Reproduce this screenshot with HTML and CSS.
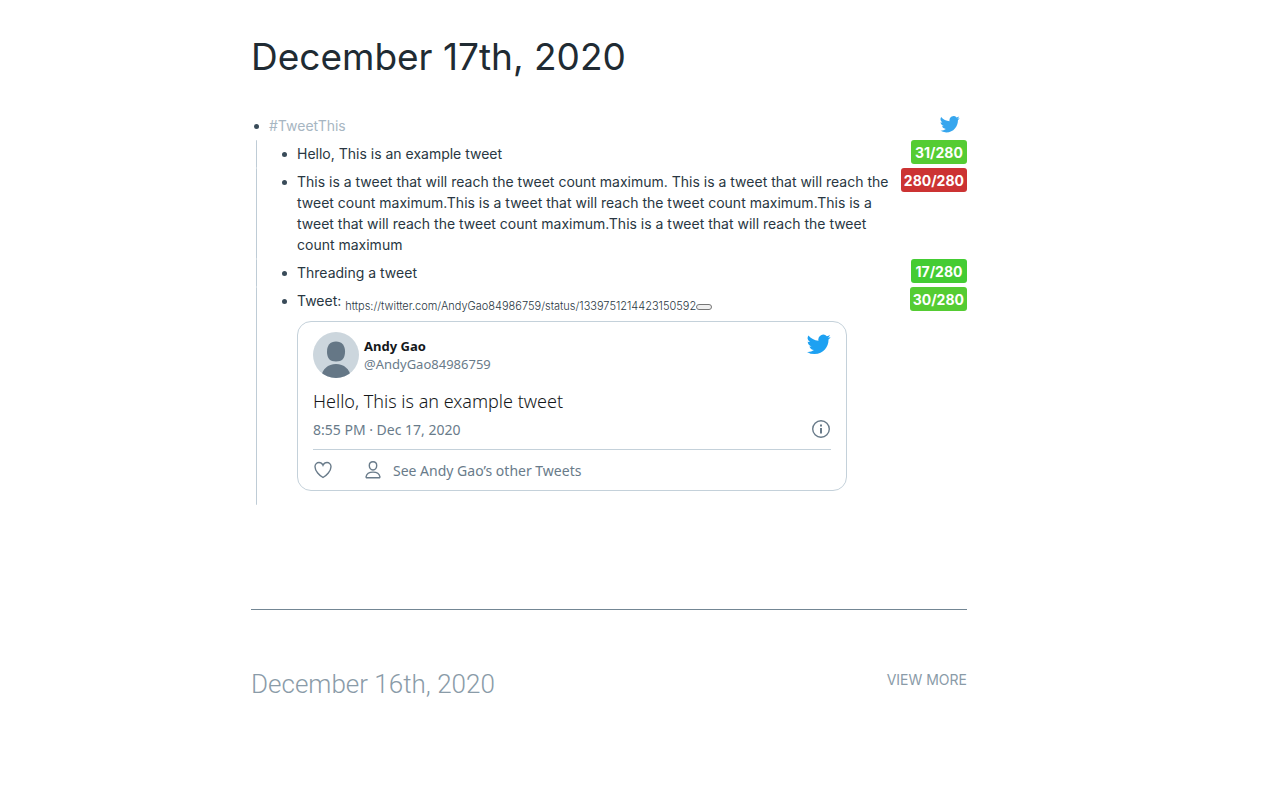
FILE: index.html
```html
<!DOCTYPE html>
<html lang="en">
<head>
    <meta charset="utf-8">
    <title>December 17th, 2020</title>
    <meta name="viewport" content="width=device-width, initial-scale=1.0">
    <link rel="stylesheet" href="styles.css">
</head>
<body>
    <!-- Shared icon shapes -->
    <svg class="icon-defs" aria-hidden="true">
        <symbol id="bird" viewBox="0 0 24 24">
            <path d="M23.6 4.9c-.9.4-1.8.6-2.8.8 1-.6 1.8-1.6 2.2-2.7-1 .6-2 1-3.1 1.2a4.9 4.9 0 0 0-8.4 4.5C7.4 8.500 3.800 6.500 1.400 3.600a4.900 4.900 0 0 0 1.500 6.500c-.8 0-1.600-.2-2.200-.6v.1c0 2.400 1.700 4.400 3.900 4.800a4.900 4.900 0 0 1-2.200.1c.6 2 2.400 3.400 4.600 3.400A9.900 9.900 0 0 1 0 19.900a13.900 13.900 0 0 0 7.500 2.200c9.100 0 14-7.500 14-14v-.6c.8-.7 1.500-1.600 2.100-2.600z"/>
        </symbol>
    </svg>

    <main class="page">
        <h1 class="title">December 17th, 2020</h1>

        <div class="block">
            <span class="bullet"></span>
            <div class="block-text"><a class="tag" href="#">#TweetThis</a></div>
            <button class="tweet-btn" aria-label="Send tweet"><svg class="bird-small"><use href="#bird"/></svg></button>
        </div>

        <div class="children">
            <div class="block">
                <span class="bullet"></span>
                <div class="block-text">Hello, This is an example tweet</div>
                <span class="count">31/280</span>
            </div>
            <div class="block">
                <span class="bullet"></span>
                <div class="block-text">This is a tweet that will reach the tweet count maximum. This is a tweet that will reach the tweet count maximum.This is a tweet that will reach the tweet count maximum.This is a tweet that will reach the tweet count maximum.This is a tweet that will reach the tweet count maximum</div>
                <span class="count count-max">280/280</span>
            </div>
            <div class="block">
                <span class="bullet"></span>
                <div class="block-text">Threading a tweet</div>
                <span class="count count-low">17/280</span>
            </div>
            <div class="block">
                <span class="bullet"></span>
                <div class="block-text">
                    Tweet: <span class="url">https://twitter.com/AndyGao84986759/status/1339751214423150592<button class="url-btn" aria-label="Edit link"></button></span>

                    <article class="tweet">
                        <header class="tweet-head">
                            <svg class="avatar" viewBox="0 0 46 46">
                                <defs><clipPath id="round"><circle cx="23" cy="23" r="23"/></clipPath></defs>
                                <g clip-path="url(#round)">
                                    <rect width="46" height="46" fill="#ccd6dd"/>
                                    <path d="M23 9.500c-6 0-9 4-9 10 0 7 3 10 9 10s9-3 9-10c0-6-3-10-9-10z" fill="#657786"/>
                                    <path d="M8 46c1-9 7-14 15-14s14 5 15 14z" fill="#657786"/>
                                </g>
                            </svg>
                            <div class="author">
                                <strong class="name">Andy Gao</strong>
                                <a class="handle" href="#">@AndyGao84986759</a>
                            </div>
                            <svg class="bird-large"><use href="#bird"/></svg>
                        </header>
                        <p class="tweet-text">Hello, This is an example tweet</p>
                        <div class="tweet-meta">
                            <a href="#">8:55 PM · Dec 17, 2020</a>
                            <svg class="icon" viewBox="0 0 20 20">
                                <circle cx="10" cy="10" r="8.300"/>
                                <path d="M10 9v5.500M10 5.500v2" stroke-width="2"/>
                            </svg>
                        </div>
                        <footer class="tweet-foot">
                            <button class="like" aria-label="Like">
                                <svg class="icon" viewBox="0 0 20 20">
                                    <path d="M10 17.500C6.500 15.500 2 11 2 6.800 2 4.200 3.900 2.500 6 2.500c1.800 0 3.200 1.100 4 2.800.8-1.700 2.200-2.800 4-2.800 2.100 0 4 1.700 4 4.300 0 4.200-4.500 8.700-8 10.700z"/>
                                </svg>
                            </button>
                            <a class="others" href="#">
                                <svg class="icon" viewBox="0 0 20 20">
                                    <path d="M10 1.700c-2.500 0-3.700 1.600-3.700 3.900S7.700 10 10 10s3.700-2.100 3.700-4.400S12.500 1.700 10 1.700zM4 17.700c-.7 0-1-.4-.9-1 .5-2.900 3.200-4.600 6.900-4.600s6.400 1.700 6.900 4.600c.1.600-.2 1-.9 1z"/>
                                </svg>
                                See Andy Gao’s other Tweets
                            </a>
                        </footer>
                    </article>
                </div>
                <span class="count">30/280</span>
            </div>
        </div>

        <section class="previous">
            <h2 class="previous-title">December 16th, 2020</h2>
            <a class="view-more" href="#">VIEW MORE</a>
        </section>
    </main>
</body>
</html>
```
FILE: styles.css
```css
* {
    box-sizing: border-box;
}
body {
    margin: 0;
    background: #fff;
    color: #202b33;
    font-family: Inter, sans-serif;
    font-size: 14px;
    line-height: 21px;
}
a {
    color: inherit;
    text-decoration: none;
}
button {
    padding: 0;
    border: 0;
    background: none;
    cursor: pointer;
}
svg {
    display: block;
    flex: none;
}
.icon-defs {
    display: none;
}
.page {
    padding: 32px 313px 40px 251px;
}
.title {
    margin: 0 0 30px;
    font-size: 37px;
    font-weight: 400;
    line-height: 50px;
}

/* Outline blocks */
.block {
    display: flex;
    align-items: flex-start;
    min-height: 28px;
}
.bullet {
    flex: none;
    width: 5px;
    height: 5px;
    margin: 12px 10px 0 3px;
    border-radius: 50%;
    background: #394b59;
}
.block-text {
    flex: 1;
    min-width: 0;
    padding: 3px 0 4px;
}
.children {
    margin-left: 5px;
}
.children .block {
    padding-left: 22px;
    border-left: 1px solid #bfccd6;
    border-radius: 1px;
}
.children .block-text {
    color: #293742;
}
.tag {
    color: #a7b6c2;
}
.tweet-btn {
    margin: 2px 7px 0 0;
}
.bird-small {
    width: 20px;
    height: 20px;
    fill: #37a6ee;
}

/* Character counters */
.count {
    flex: none;
    min-width: 56px;
    margin-left: 6px;
    padding: 2px 3px 0;
    border-radius: 3px;
    background: #5c3;
    color: #fff;
    font-weight: 700;
    line-height: 22px;
    text-align: center;
}
.count-low {
    background: #4c3;
}
.count-max {
    background: #c33;
}

.url {
    font-size: 11px;
    font-weight: 300;
    vertical-align: sub;
    line-height: 11px;
}
.url-btn {
    width: 16px;
    height: 6px;
    border: 1px solid #767676;
    border-radius: 3px;
    background: #efefef;
    vertical-align: 1px;
}

/* Embedded tweet */
.tweet {
    max-width: 550px;
    margin: 9px 0 10px;
    padding: 10px 15px 9px;
    border: 1px solid #c4d1da;
    border-radius: 14px;
    color: #697b8a;
    font-family: "Noto Sans", sans-serif;
}
.tweet-head {
    display: flex;
    align-items: flex-start;
}
.avatar {
    width: 46px;
    height: 46px;
}
.author {
    flex: 1;
    margin: 5px;
    font-size: 13px;
    line-height: 18px;
}
.name {
    display: block;
    color: #14171a;
    font-weight: 700;
}
.handle {
    display: block;
}
.bird-large {
    width: 24px;
    height: 24px;
    fill: #1da1f2;
}
.tweet-text {
    margin: 10px 0 5px;
    color: #14171a;
    font-size: 18px;
    font-weight: 300;
    line-height: 26px;
}
.tweet-meta {
    display: flex;
    align-items: center;
    justify-content: space-between;
    padding-bottom: 9px;
    border-bottom: 1px solid #c4d1da;
}
.icon {
    width: 20px;
    height: 20px;
    fill: none;
    stroke: #697b8a;
    stroke-width: 1.4;
}
.tweet-foot {
    display: flex;
    gap: 30px;
    padding-top: 10px;
}
.others {
    display: flex;
    align-items: center;
    gap: 10px;
}

/* Previous day */
.previous {
    display: flex;
    align-items: flex-start;
    justify-content: space-between;
    margin-top: 104px;
    padding-top: 56px;
    border-top: 1px solid #738694;
    color: #8a9ba8;
}
.previous-title {
    margin: 0;
    font-family: Roboto, sans-serif;
    font-size: 26px;
    font-weight: 300;
    line-height: 36px;
}
.view-more {
    padding-top: 3px;
}
```
